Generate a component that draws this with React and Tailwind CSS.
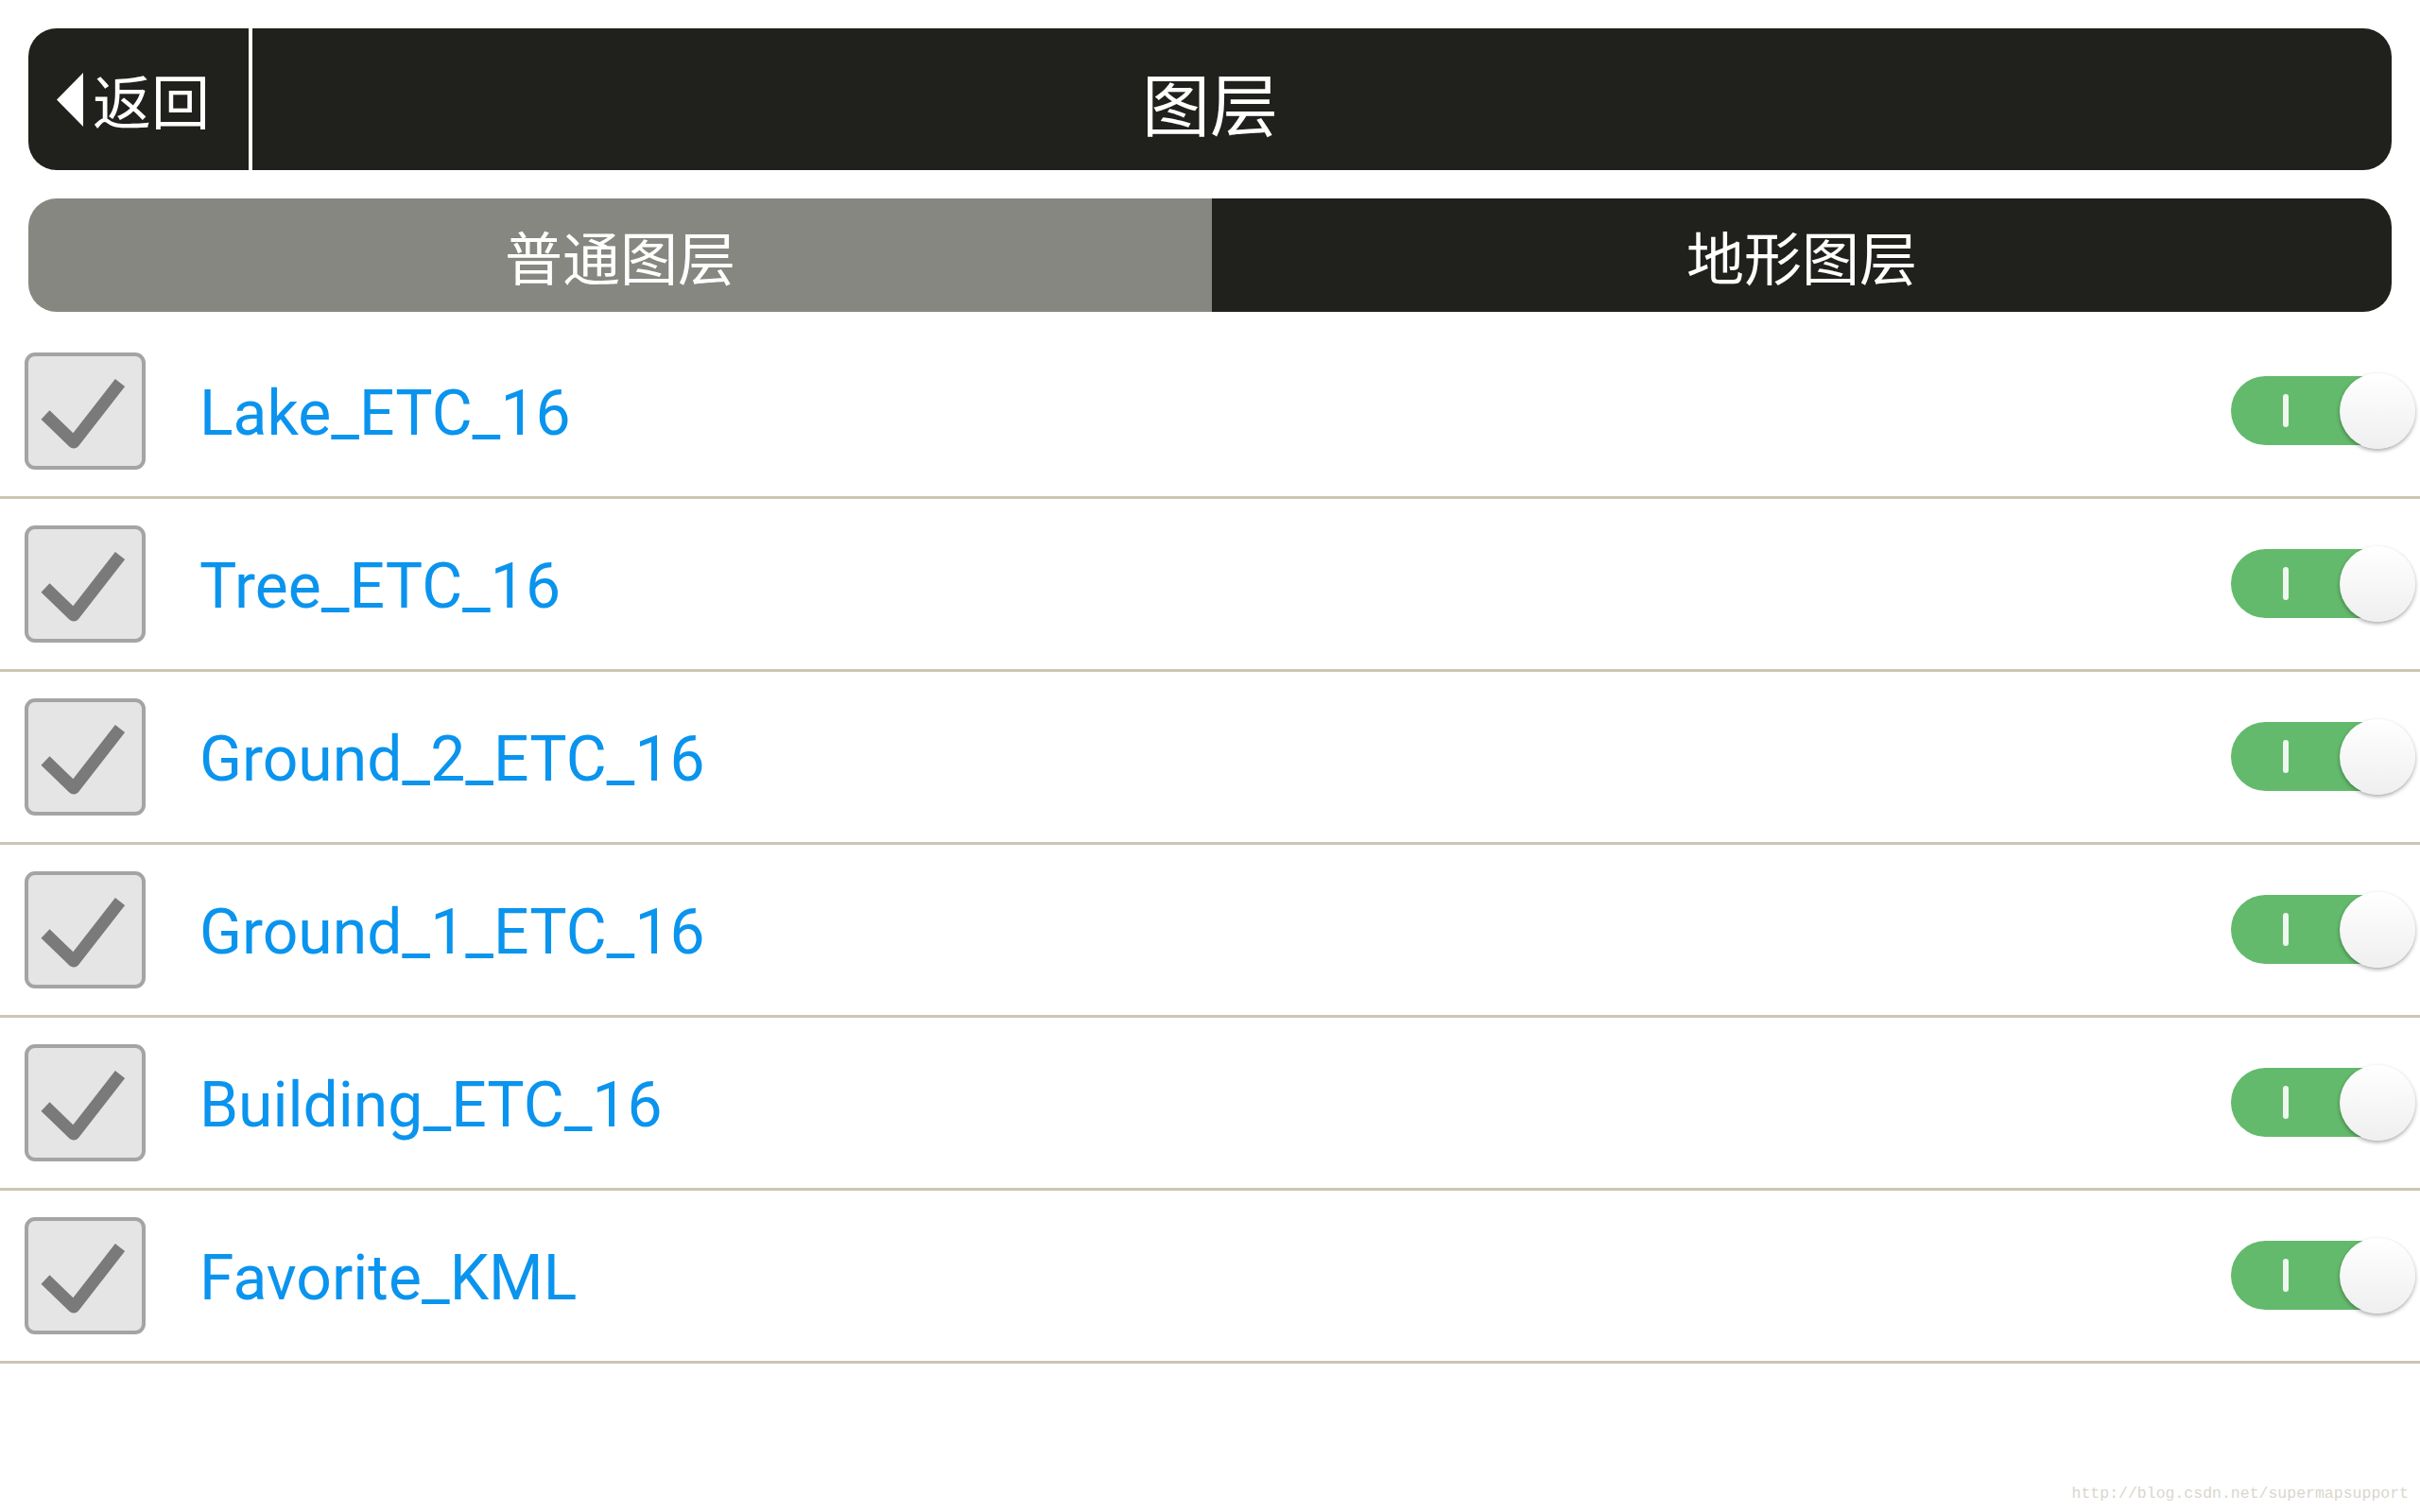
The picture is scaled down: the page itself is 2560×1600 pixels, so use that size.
import React, { useState } from 'react';

const layers = [
    'Lake_ETC_16',
    'Tree_ETC_16',
    'Ground_2_ETC_16',
    'Ground_1_ETC_16',
    'Building_ETC_16',
    'Favorite_KML',
];

const cjk = { fontFamily: '"Noto Sans CJK SC", "Noto Sans", sans-serif' };

function CheckBox({ checked, onClick }) {
    return (
        <button
            onClick={onClick}
            className="w-[128px] h-[124px] shrink-0 rounded-[11px] border-[4px] border-[#a4a4a4] bg-[#e5e5e5] p-0"
        >
            {checked && (
                <svg width="120" height="116" viewBox="0 0 120 116" className="block">
                    <path
                        d="M18 62 L48 91 L97 28"
                        fill="none"
                        stroke="#7a7a7a"
                        strokeWidth="13"
                        strokeLinejoin="round"
                        strokeLinecap="butt"
                    />
                </svg>
            )}
        </button>
    );
}

function Toggle({ on, onClick }) {
    return (
        <button onClick={onClick} className="relative w-[195px] h-[80px] shrink-0">
            <span
                className={`absolute left-0 top-[3px] w-[185px] h-[73px] rounded-full ${on ? 'bg-[#63ba6c]' : 'bg-[#d6d6d6]'}`}
            />
            {on && <span className="absolute left-[55px] top-[22px] w-[6px] h-[35px] rounded-full bg-white/90" />}
            <span
                className={`absolute top-0 w-[80px] h-[80px] rounded-full bg-gradient-to-b from-white to-[#efefef] shadow-[0_2px_4px_rgba(0,0,0,0.35)] ${on ? 'right-0' : 'left-0'}`}
            />
        </button>
    );
}

export default function App() {
    const [tab, setTab] = useState(0);
    const [checked, setChecked] = useState(layers.map(() => true));
    const [visible, setVisible] = useState(layers.map(() => true));

    const flip = (list, setList, i) => {
        const next = [...list];
        next[i] = !next[i];
        setList(next);
    };

    return (
        <div className="min-h-screen bg-white flex flex-col">
            {/* title bar */}
            <div className="mx-[30px] mt-[30px] h-[150px] rounded-[30px] bg-[#20201c] flex text-white" style={cjk}>
                <button className="w-[233px] flex items-center pl-[30px]">
                    <svg width="28" height="57" viewBox="0 0 28 57" className="block">
                        <polygon points="28,0 0,28.5 28,57" fill="#ffffff" />
                    </svg>
                    <span className="ml-[10px] text-[62px] leading-none">返回</span>
                </button>
                <div className="w-[4px] bg-white" />
                <div className="flex-1 flex items-center justify-center pt-[3px]">
                    <span className="text-[72px] leading-none">图层</span>
                </div>
                <div className="w-[237px]" />
            </div>

            {/* tabs */}
            <div className="mx-[30px] mt-[30px] h-[120px] rounded-[30px] overflow-hidden flex text-white" style={cjk}>
                {['普通图层', '地形图层'].map((t, i) => (
                    <button
                        key={t}
                        onClick={() => setTab(i)}
                        className={`flex items-center justify-center text-[61px] leading-none ${i === 0 ? 'w-[1252px]' : 'flex-1'} ${tab === i ? 'bg-[#878781]' : 'bg-[#20201c]'}`}
                    >
                        {t}
                    </button>
                ))}
            </div>

            {/* layer list */}
            <div className="mt-[15px]">
                {layers.map((name, i) => (
                    <div key={name} className="h-[183px] border-b-[3px] border-[#ccc6b1] flex items-center">
                        <div className="ml-[26px] flex">
                            <CheckBox checked={checked[i]} onClick={() => flip(checked, setChecked, i)} />
                        </div>
                        <span
                            className="ml-[57px] mt-[6px] text-[66px] leading-none text-[#0a94ee]"
                            style={{ fontFamily: 'Roboto, "Liberation Sans", sans-serif' }}
                        >
                            {name}
                        </span>
                        <div className="ml-auto mr-[5px] flex">
                            <Toggle on={visible[i]} onClick={() => flip(visible, setVisible, i)} />
                        </div>
                    </div>
                ))}
            </div>

            {/* watermark */}
            <div
                className="mt-auto self-end mr-[12px] mb-[9px] text-[16.5px] leading-[20px] text-[#dad6ce]"
                style={{ fontFamily: '"Liberation Mono", monospace' }}
            >
                http://blog.csdn.net/supermapsupport
            </div>
        </div>
    );
}
